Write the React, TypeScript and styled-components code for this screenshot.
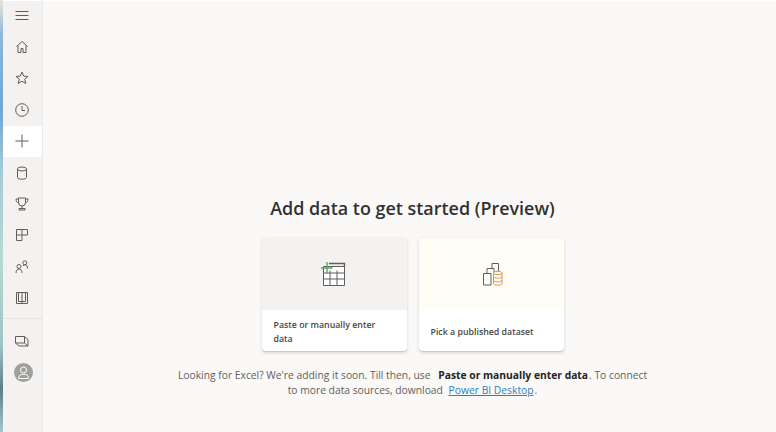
import React from 'react';
import styled, { createGlobalStyle } from 'styled-components';

const GlobalStyle = createGlobalStyle`
  html, body {
    margin: 0;
    padding: 0;
    height: 100%;
    overflow: hidden;
    font-family: "Open Sans", "Noto Sans", sans-serif;
  }
  #root {
    height: 100%;
  }
`;

const Page = styled.div`
  display: flex;
  width: 776px;
  height: 432px;
  background-color: #faf9f8;
  box-shadow: inset 0 1px 0 #ffffff;
`;

const Wallpaper = styled.div`
  width: 3px;
  flex: none;
  background: linear-gradient(
    180deg,
    #e8e4da 0%,
    #8fb8d8 8%,
    #6fa6d2 25%,
    #a5cbd8 40%,
    #b9d8d2 60%,
    #9cc4c4 80%,
    #5d7f8c 90%,
    #a9c6cc 100%
  );
`;

const Nav = styled.nav`
  width: 39px;
  flex: none;
  display: flex;
  flex-direction: column;
  background-color: #f3f2f1;
  border-right: 1px solid #eaeaea;
  box-shadow: inset 0 1px 0 #ffffff;
`;

const NavItem = styled.div<{ $active?: boolean }>`
  height: 31.4px;
  flex: none;
  display: flex;
  align-items: center;
  justify-content: center;
  padding-right: 1px;
  color: #605e5c;
  background-color: ${(p) => (p.$active ? '#ffffff' : 'transparent')};
`;

const NavDivider = styled.div`
  height: 1px;
  margin: 4px 0 6.5px;
  background-color: #e6e4e2;
`;

const Avatar = styled.div`
  width: 19px;
  height: 19px;
  margin-left: 2px;
  border-radius: 50%;
  background-color: #a19f9d;
  display: flex;
  align-items: center;
  justify-content: center;
  color: #ffffff;
`;

const Main = styled.main`
  flex: 1;
  display: flex;
  flex-direction: column;
  align-items: center;
  padding: 195px 0 0 6px;
  box-sizing: border-box;
`;

const Title = styled.h1`
  margin: 0;
  font-size: 17.95px;
  line-height: 26px;
  font-weight: 600;
  color: #323130;
`;

const Cards = styled.div`
  display: flex;
  gap: 12px;
  margin-top: 17px;
`;

const Card = styled.div`
  width: 145px;
  height: 113px;
  display: flex;
  flex-direction: column;
  background-color: #ffffff;
  border-radius: 4px;
  overflow: hidden;
  box-shadow: 0 1.6px 3.6px rgba(0, 0, 0, 0.13), 0 0.3px 0.9px rgba(0, 0, 0, 0.11);
`;

const CardArt = styled.div<{ $tint: string }>`
  height: 72px;
  flex: none;
  display: flex;
  align-items: center;
  justify-content: center;
  background-color: ${(p) => p.$tint};
`;

const CardLabel = styled.div`
  flex: 1;
  display: flex;
  align-items: center;
  padding: 2px 12px 0 12px;
  font-size: 8.8px;
  line-height: 14px;
  font-weight: 600;
  color: #484644;
`;

const Hint = styled.p`
  margin: 17px 0 0;
  width: 475px;
  text-align: center;
  font-size: 10.3px;
  line-height: 15px;
  color: #605e5c;
`;

const Strong = styled.b`
  font-weight: 700;
  color: #252423;
  margin: 0 1px 0 5px;
`;

const DocLink = styled.a`
  color: #2f7fb8;
  text-decoration: underline;
  margin: 0 1px 0 3px;
`;

const strokeIcon = {
  width: 16,
  height: 16,
  viewBox: '0 0 16 16',
  fill: 'none',
  stroke: 'currentColor',
  strokeWidth: 1,
} as const;

const icons: Record<string, React.ReactNode> = {
  menu: (
    <svg {...strokeIcon} strokeWidth={1.1}>
      <path d="M1.5 3.5h13M1.5 7.5h13M1.5 11.5h13" />
    </svg>
  ),
  home: (
    <svg {...strokeIcon}>
      <path d="M2.5 7.5 8 2.5l5.5 5M4 6.500v7h3v-4h2v4h3v-7" strokeLinejoin="round" />
    </svg>
  ),
  star: (
    <svg {...strokeIcon}>
      <path d="m8 2 1.700 4.100 4.300.3-3.300 2.800 1.100 4.300L8 11.200l-3.800 2.300 1.100-4.300L2 6.400l4.300-.3z" strokeLinejoin="round" />
    </svg>
  ),
  clock: (
    <svg {...strokeIcon}>
      <circle cx="8" cy="8" r="6.300" />
      <path d="M8 4v4.500h3" />
    </svg>
  ),
  plus: (
    <svg {...strokeIcon}>
      <path d="M8 1.500v13M1.500 8h13" />
    </svg>
  ),
  data: (
    <svg {...strokeIcon}>
      <path d="M3.500 4v8.500c0 1 2 1.700 4.500 1.700s4.500-.7 4.500-1.700V4" />
      <ellipse cx="8" cy="4" rx="4.500" ry="2" />
    </svg>
  ),
  trophy: (
    <svg {...strokeIcon}>
      <path d="M4.500 2h7v4.500a3.500 3.500 0 0 1-7 0zM4.500 3H2c0 2.500 1 3.700 2.800 4M11.500 3H14c0 2.500-1 3.700-2.800 4M8 10v2.500M5 14v-1.500h6V14z" />
    </svg>
  ),
  apps: (
    <svg {...strokeIcon}>
      <path d="M2.500 2.500h11v5.500h-5.500v5.500h-5.500zM2.500 8h5.500M8 2.500V8" />
    </svg>
  ),
  people: (
    <svg {...strokeIcon}>
      <circle cx="10.800" cy="3.800" r="2" />
      <circle cx="5" cy="7.500" r="2" />
      <path d="M2 14c0-2.600 1.200-4 3-4s3 1.400 3 4M9 7c.5-.8 1-1.200 1.800-1.200 1.700 0 2.800 1.300 2.800 3.700" />
    </svg>
  ),
  book: (
    <svg {...strokeIcon}>
      <path d="M2.500 2.500h11v11h-11zM8 2.500v11M4.500 2.500v9h7v-9" />
    </svg>
  ),
  workspaces: (
    <svg {...strokeIcon}>
      <path d="M1.500 3.500h9l3.500 3v6.500H5l-3.500-3zM1.500 10h9V3.500M10.500 10l3.500 3" strokeLinejoin="round" />
    </svg>
  ),
};

const navTop = ['menu', 'home', 'star', 'clock', 'plus', 'data', 'trophy', 'apps', 'people', 'book'];

const TableIcon = () => (
  <svg width="26" height="26" viewBox="1 0 26 26" fill="none">
    <path d="M3.500 5.500h21v19h-21z M10 9.500v15M17 9.500v15M3.500 12h21M3.500 18h21" stroke="#605e5c" strokeWidth="1" fill="#ffffff" />
    <path d="M9 2.500h15.500v3" stroke="#605e5c" strokeWidth="1.400" />
    <path d="M7 1v11.500M1 7h11.500" stroke="#5aa469" strokeWidth="1.400" />
  </svg>
);

const DatasetIcon = () => (
  <svg width="24" height="26" viewBox="-3 0 24 26" fill="none">
    <path d="M1.500 12.500h7.500v11.500h-7.500zM5 12.500V7.500h7v5M10 7.500V2.500h6.500v8" stroke="#605e5c" strokeWidth="1" fill="none" />
    <path
      d="M11.500 12v10.500c0 1 1.800 1.700 4.300 1.700s4.200-.7 4.200-1.700V12M11.500 15.500c0 1 1.800 1.700 4.300 1.700s4.200-.7 4.200-1.700M11.500 19.200c0 1 1.800 1.700 4.300 1.700s4.200-.7 4.200-1.700"
      stroke="#e8913c"
      strokeWidth="1"
      fill="#ffffff"
    />
    <ellipse cx="15.800" cy="12" rx="4.200" ry="1.700" stroke="#e8913c" strokeWidth="1" fill="#ffffff" />
  </svg>
);

const App: React.FC = () => {
  return (
    <>
      <GlobalStyle />
      <Page>
        <Wallpaper />
        <Nav>
          {navTop.map((name) => (
            <NavItem key={name} $active={name === 'plus'}>
              {icons[name]}
            </NavItem>
          ))}
          <NavDivider />
          <NavItem>{icons.workspaces}</NavItem>
          <NavItem>
            <Avatar>
              <svg width="13" height="13" viewBox="0 0 13 13" fill="none" stroke="currentColor" strokeWidth="1">
                <circle cx="6.500" cy="4" r="3" />
                <path d="M1.500 12.500c0-2.800 2-4.300 5-4.300s5 1.500 5 4.300z" />
              </svg>
            </Avatar>
          </NavItem>
        </Nav>
        <Main>
          <Title>Add data to get started (Preview)</Title>
          <Cards>
            <Card>
              <CardArt $tint="#f3f2f1">
                <TableIcon />
              </CardArt>
              <CardLabel>Paste or manually enter data</CardLabel>
            </Card>
            <Card>
              <CardArt $tint="#fefdf6">
                <DatasetIcon />
              </CardArt>
              <CardLabel>Pick a published dataset</CardLabel>
            </Card>
          </Cards>
          <Hint>
            Looking for Excel? We're adding it soon. Till then, use{' '}
            <Strong>Paste or manually enter data</Strong>. To connect to more data sources, download{' '}
            <DocLink>Power BI Desktop</DocLink>.
          </Hint>
        </Main>
      </Page>
    </>
  );
};

export default App;
